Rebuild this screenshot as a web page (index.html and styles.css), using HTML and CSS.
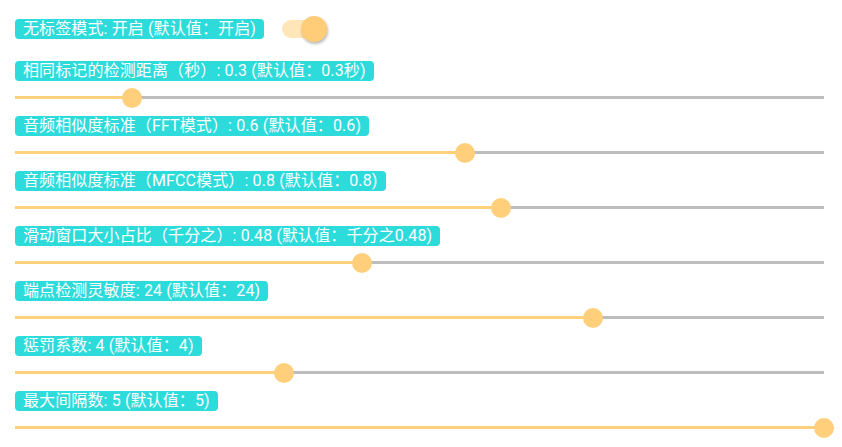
FILE: index.html
```html
<!DOCTYPE html>
<html lang="zh-CN">
<head>
<meta charset="utf-8">
<link rel="stylesheet" href="styles.css">
</head>
<body>
<div class="panel">
  <div class="switch-row">
    <span class="tag">无标签模式: 开启 (默认值：开启)</span>
    <span class="switch"><span class="switch-track"></span><span class="switch-thumb"></span></span>
  </div>
  <div class="slider-row">
    <span class="tag">相同标记的检测距离（秒）: 0.3 (默认值：0.3秒)</span>
    <div class="slider"><div class="track"><div class="fill" style="width:14.46%"></div><div class="thumb" style="left:14.46%"></div></div></div>
  </div>
  <div class="slider-row">
    <span class="tag">音频相似度标准（FFT模式）: 0.6 (默认值：0.6)</span>
    <div class="slider"><div class="track"><div class="fill" style="width:55.62%"></div><div class="thumb" style="left:55.62%"></div></div></div>
  </div>
  <div class="slider-row">
    <span class="tag">音频相似度标准（MFCC模式）: 0.8 (默认值：0.8)</span>
    <div class="slider"><div class="track"><div class="fill" style="width:60.07%"></div><div class="thumb" style="left:60.07%"></div></div></div>
  </div>
  <div class="slider-row">
    <span class="tag">滑动窗口大小占比（千分之）: 0.48 (默认值：千分之0.48)</span>
    <div class="slider"><div class="track"><div class="fill" style="width:42.89%"></div><div class="thumb" style="left:42.89%"></div></div></div>
  </div>
  <div class="slider-row">
    <span class="tag">端点检测灵敏度: 24 (默认值：24)</span>
    <div class="slider"><div class="track"><div class="fill" style="width:71.45%"></div><div class="thumb" style="left:71.45%"></div></div></div>
  </div>
  <div class="slider-row">
    <span class="tag">惩罚系数: 4 (默认值：4)</span>
    <div class="slider"><div class="track"><div class="fill" style="width:33.25%"></div><div class="thumb" style="left:33.25%"></div></div></div>
  </div>
  <div class="slider-row">
    <span class="tag">最大间隔数: 5 (默认值：5)</span>
    <div class="slider"><div class="track"><div class="fill" style="width:100%"></div><div class="thumb" style="left:100%"></div></div></div>
  </div>
</div>
</body>
</html>
```
FILE: styles.css
```css
html, body {
  margin: 0;
  padding: 0;
  background: #ffffff;
}
.panel {
  padding: 19px 18px 0 15px;
  font-family: Roboto, "Noto Sans CJK SC", sans-serif;
}
.tag {
  display: block;
  flex: none;
  height: 20px;
  line-height: 20px;
  padding: 0 8px;
  background: #2ddbdb;
  color: #ffffff;
  font-size: 16px;
  letter-spacing: 0.12px;
  border-radius: 4px;
  white-space: nowrap;
}
.switch-row {
  display: flex;
  align-items: center;
  height: 20px;
  margin-bottom: 22px;
}
.switch {
  position: relative;
  display: block;
  flex: none;
  width: 46px;
  height: 26px;
  margin-left: 18px;
}
.switch-track {
  position: absolute;
  left: 0;
  top: 4px;
  width: 40px;
  height: 18px;
  border-radius: 9px;
  background: #fee6b8;
}
.switch-thumb {
  position: absolute;
  left: 19px;
  top: 0;
  width: 26px;
  height: 26px;
  border-radius: 50%;
  background: #ffcd78;
  box-shadow: 1px 2px 3px rgba(0, 0, 0, 0.28);
}
.slider-row {
  display: flex;
  flex-direction: column;
  align-items: flex-start;
  margin-bottom: 2px;
}
.slider {
  align-self: stretch;
  height: 33px;
  position: relative;
}
.track {
  position: absolute;
  left: 0;
  right: 0;
  top: 15px;
  height: 3px;
  background: #bdbdbd;
}
.fill {
  height: 100%;
  background: #fdd07c;
}
.thumb {
  position: absolute;
  top: -8.5px;
  width: 20px;
  height: 20px;
  margin-left: -10px;
  border-radius: 50%;
  background: #ffcf7c;
}
```
